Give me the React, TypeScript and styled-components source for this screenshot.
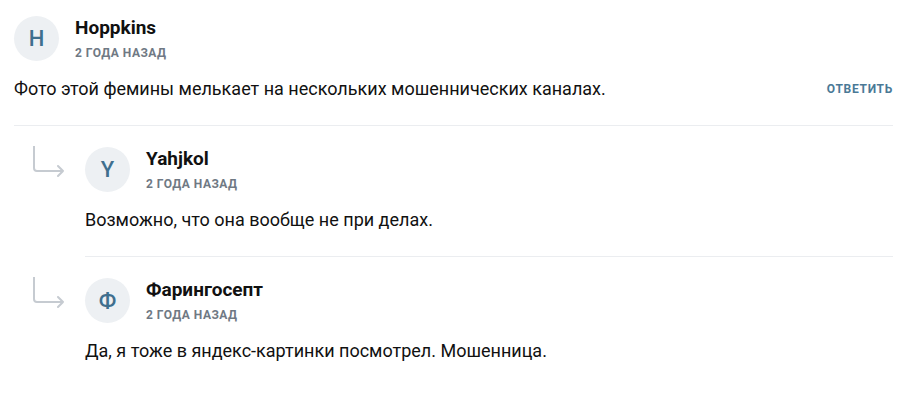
import React from "react";
import styled, { createGlobalStyle } from "styled-components";

const GlobalStyle = createGlobalStyle`
  body {
    margin: 0;
    background: #ffffff;
    font-family: Roboto, "Liberation Sans", Arial, sans-serif;
    color: #111111;
  }
`;

const Container = styled.div`
  width: 908px;
  padding: 16px 15px 0 14px;
  box-sizing: border-box;
`;

const Comment = styled.div`
  padding-bottom: 24px;
  border-bottom: 1px solid #ebedf0;
`;

const Header = styled.div`
  display: flex;
  align-items: flex-start;
  gap: 16px;
`;

const Avatar = styled.div`
  width: 45px;
  height: 45px;
  border-radius: 50%;
  background: #edf0f3;
  color: #3f6f8e;
  font-size: 22px;
  font-weight: 500;
  display: flex;
  align-items: center;
  justify-content: center;
  flex-shrink: 0;
`;

const Meta = styled.div`
  display: flex;
  flex-direction: column;
  padding-top: 1px;
`;

const Name = styled.span`
  font-size: 19px;
  line-height: 22px;
  font-weight: 700;
  color: #111111;
`;

const Time = styled.span`
  margin-top: 6px;
  font-size: 12px;
  line-height: 16px;
  font-weight: 700;
  letter-spacing: 0.5px;
  text-transform: uppercase;
  color: #6f7984;
`;

const BodyRow = styled.div`
  display: flex;
  align-items: center;
  justify-content: space-between;
  margin-top: 16px;
`;

const Text = styled.p`
  margin: 0;
  font-size: 18px;
  line-height: 24px;
  color: #111111;
`;

const ReplyLink = styled.button`
  border: none;
  background: none;
  padding: 0;
  font-family: inherit;
  font-size: 12px;
  font-weight: 700;
  letter-spacing: 0.7px;
  text-transform: uppercase;
  color: #4a7996;
  cursor: pointer;
`;

const Replies = styled.div`
  display: flex;
  flex-direction: column;
`;

const ReplyRow = styled.div`
  display: flex;
`;

const ArrowCell = styled.div`
  width: 71px;
  flex-shrink: 0;
  padding: 20px 0 0 18px;
  box-sizing: border-box;
`;

const ReplyBody = styled.div<{ $divider: boolean }>`
  flex: 1;
  padding: 21px 0 24px;
  border-bottom: ${(p) => (p.$divider ? "1px solid #ebedf0" : "none")};
`;

const ReplyArrow = () => (
  <svg width="34" height="32" viewBox="0 0 34 32" fill="none">
    <path
      d="M2 0 V22 a3 3 0 0 0 3 3 H31 M26 20 L31 25 L26 30"
      stroke="#c6cbd1"
      strokeWidth="2"
      strokeLinecap="round"
      strokeLinejoin="round"
    />
  </svg>
);

const replies = [
  { letter: "Y", name: "Yahjkol", text: "Возможно, что она вообще не при делах." },
  { letter: "Ф", name: "Фарингосепт", text: "Да, я тоже в яндекс-картинки посмотрел. Мошенница." },
];

export default function App() {
  return (
    <>
      <GlobalStyle />
      <Container>
        <Comment>
          <Header>
            <Avatar>H</Avatar>
            <Meta>
              <Name>Hoppkins</Name>
              <Time>2 года назад</Time>
            </Meta>
          </Header>
          <BodyRow>
            <Text>Фото этой фемины мелькает на нескольких мошеннических каналах.</Text>
            <ReplyLink>Ответить</ReplyLink>
          </BodyRow>
        </Comment>
        <Replies>
          {replies.map((r, i) => (
            <ReplyRow key={r.name}>
              <ArrowCell>
                <ReplyArrow />
              </ArrowCell>
              <ReplyBody $divider={i < replies.length - 1}>
                <Header>
                  <Avatar>{r.letter}</Avatar>
                  <Meta>
                    <Name>{r.name}</Name>
                    <Time>2 года назад</Time>
                  </Meta>
                </Header>
                <BodyRow>
                  <Text>{r.text}</Text>
                </BodyRow>
              </ReplyBody>
            </ReplyRow>
          ))}
        </Replies>
      </Container>
    </>
  );
}
